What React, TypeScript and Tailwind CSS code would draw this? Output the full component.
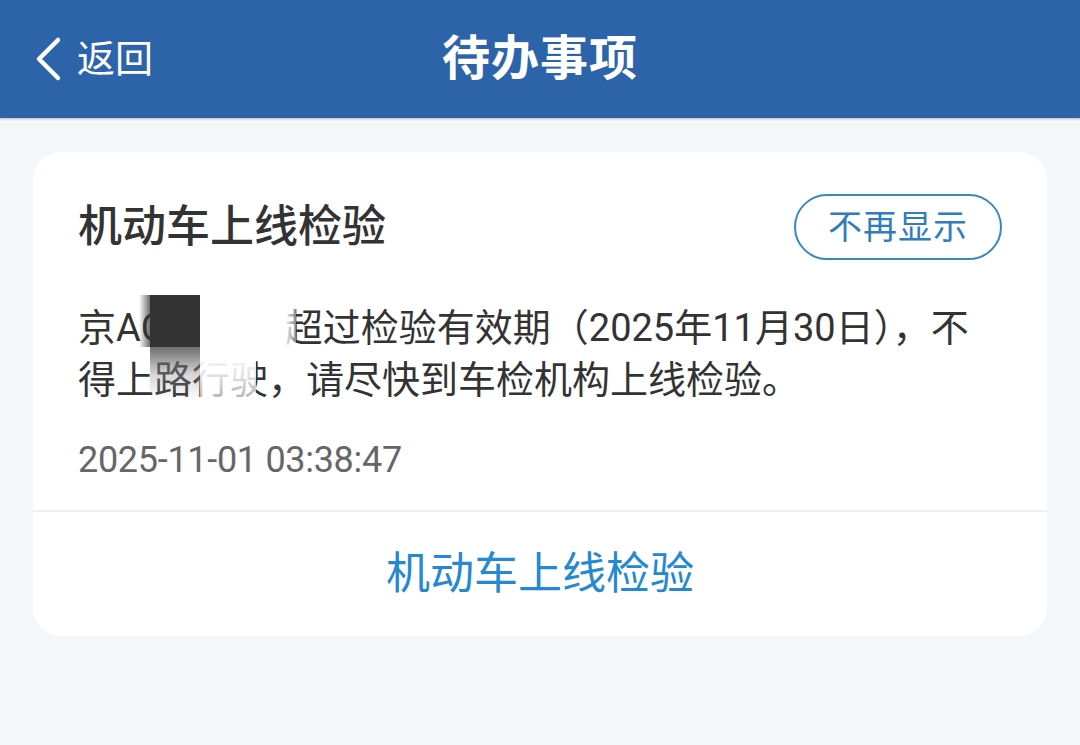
import React from "react";

export default function App() {
  const font = { fontFamily: 'Roboto, "Noto Sans CJK SC", sans-serif' };
  return (
    <div
      className="w-[1080px] h-[745px] bg-[#f3f7f9] flex flex-col overflow-hidden"
      style={font}
    >
      {/* Header */}
      <div className="relative h-[118px] bg-[#2d63a8] flex items-center shadow-[0_1px_2px_rgba(0,0,0,0.25)]">
        <div className="flex items-center pl-[33px] gap-[14px]">
          <svg width="30" height="46" viewBox="0 0 30 46" fill="none">
            <path
              d="M25 4 L6 23 L25 42"
              stroke="white"
              strokeWidth="4.5"
              strokeLinecap="round"
              strokeLinejoin="round"
            />
          </svg>
          <span className="text-white text-[38px] leading-none">返回</span>
        </div>
        <div className="absolute inset-0 flex items-center justify-center pointer-events-none">
          <span className="text-white text-[48px] font-bold leading-none tracking-[1px]">
            待办事项
          </span>
        </div>
      </div>

      {/* Card */}
      <div className="mx-[33px] mt-[34px] bg-white rounded-[28px] relative overflow-hidden">
        <div className="px-[45px] pt-[42px] pb-[30px]">
          <div className="flex items-center justify-between h-[66px]">
            <span className="text-[44px] font-medium text-[#333333] leading-none">
              机动车上线检验
            </span>
            <div className="h-[66px] w-[208px] rounded-full border-[2.5px] border-[#3a88c2] flex items-center justify-center">
              <span className="text-[34px] text-[#2f7dbd] leading-none tracking-[1px]">
                不再显示
              </span>
            </div>
          </div>

          <div className="mt-[42px] text-[38px] leading-[52px] text-[#333333] whitespace-nowrap">
            <div>
              京A<span className="inline-block w-[144px] align-top">C</span>超过检验有效期（2025年11月30日），不
            </div>
            <div>得上路行驶，请尽快到车检机构上线检验。</div>
          </div>

          <div className="mt-[34px] text-[36px] leading-[40px] text-[#666666] tracking-[-0.3px]">
            2025-11-01 03:38:47
          </div>
        </div>

        <div className="h-[2px] bg-[#eeeeee]" />

        <div className="h-[124px] flex items-center justify-center">
          <span className="text-[44px] text-[#2488d2] leading-none">机动车上线检验</span>
        </div>

        {/* Redaction overlays */}
        <div className="absolute left-[167px] top-[143px] w-[84px] h-[56px] bg-white" />
        <div className="absolute left-[251px] top-[143px] w-[12px] h-[56px] bg-gradient-to-r from-white to-white/40" />
        <div className="absolute left-[167px] top-[199px] w-[56px] h-[50px] bg-gradient-to-b from-white via-white/85 to-white/60" />
        <div className="absolute left-[117px] top-[143px] w-[50px] h-[52px] bg-[#333333]" />
        <div className="absolute left-[106px] top-[143px] w-[14px] h-[52px] bg-gradient-to-r from-transparent to-[#333333]/90" />
        <div className="absolute left-[117px] top-[195px] w-[50px] h-[54px] bg-gradient-to-b from-[#555555]/85 via-[#999999]/40 to-transparent" />
      </div>
    </div>
  );
}
